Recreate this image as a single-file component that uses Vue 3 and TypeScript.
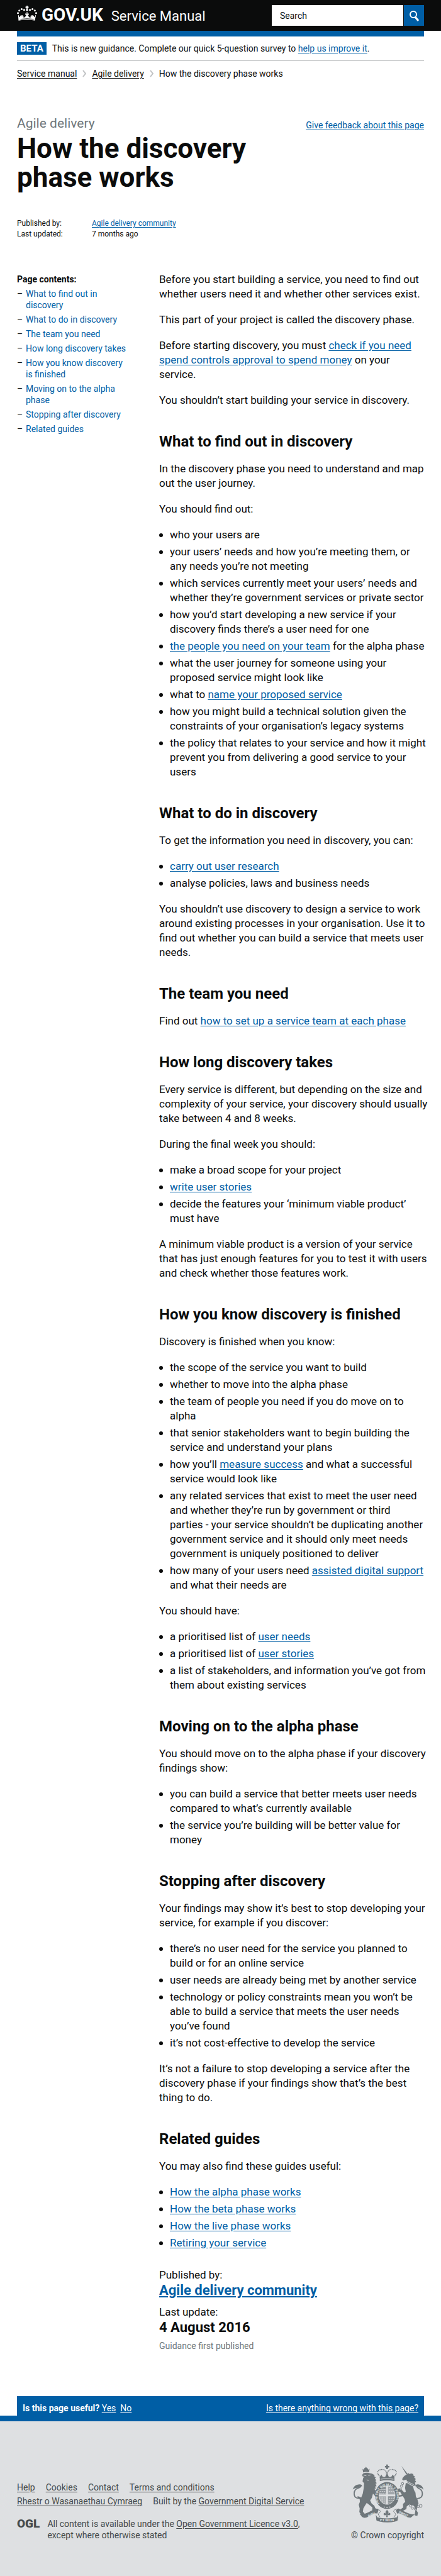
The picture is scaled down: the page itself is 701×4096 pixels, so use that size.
<script setup lang="ts">
import { ref } from 'vue'

interface Part {
  text: string
  link: boolean
}
interface Block {
  kind: 'p' | 'ul'
  lines: Part[][]
}
interface Section {
  id: string
  title: string
  blocks: Block[]
}

// "[label]" marks a link inside running text, "\n" a preferred line break
function parse(source: string): Part[] {
  return source
    .split(/(\[[^\]]+\])/)
    .filter((s) => s !== '')
    .map((s) => (s.startsWith('[') ? { text: s.slice(1, -1), link: true } : { text: s, link: false }))
}
const p = (source: string): Block => ({ kind: 'p', lines: [parse(source)] })
const ul = (...items: string[]): Block => ({ kind: 'ul', lines: items.map(parse) })

const lead: Part[][] = [
  'Before you start building a service, you need to find out\nwhether users need it and whether other services exist.',
  'This part of your project is called the discovery phase.',
  'Before starting discovery, you must [check if you need\nspend controls approval to spend money] on your\nservice.',
  'You shouldn’t start building your service in discovery.',
].map(parse)

const sections: Section[] = [
  {
    id: 'what-to-find-out',
    title: 'What to find out in discovery',
    blocks: [
      p('In the discovery phase you need to understand and map\nout the user journey.'),
      p('You should find out:'),
      ul(
        'who your users are',
        'your users’ needs and how you’re meeting them, or\nany needs you’re not meeting',
        'which services currently meet your users’ needs and\nwhether they’re government services or private sector',
        'how you’d start developing a new service if your\ndiscovery finds there’s a user need for one',
        '[the people you need on your team] for the alpha phase',
        'what the user journey for someone using your\nproposed service might look like',
        'what to [name your proposed service]',
        'how you might build a technical solution given the\nconstraints of your organisation’s legacy systems',
        'the policy that relates to your service and how it might\nprevent you from delivering a good service to your\nusers',
      ),
    ],
  },
  {
    id: 'what-to-do',
    title: 'What to do in discovery',
    blocks: [
      p('To get the information you need in discovery, you can:'),
      ul('[carry out user research]', 'analyse policies, laws and business needs'),
      p('You shouldn’t use discovery to design a service to work\naround existing processes in your organisation. Use it to\nfind out whether you can build a service that meets user\nneeds.'),
    ],
  },
  {
    id: 'team',
    title: 'The team you need',
    blocks: [p('Find out [how to set up a service team at each phase]')],
  },
  {
    id: 'how-long',
    title: 'How long discovery takes',
    blocks: [
      p('Every service is different, but depending on the size and\ncomplexity of your service, your discovery should usually\ntake between 4 and 8 weeks.'),
      p('During the final week you should:'),
      ul(
        'make a broad scope for your project',
        '[write user stories]',
        'decide the features your ‘minimum viable product’\nmust have',
      ),
      p('A minimum viable product is a version of your service\nthat has just enough features for you to test it with users\nand check whether those features work.'),
    ],
  },
  {
    id: 'finished',
    title: 'How you know discovery is finished',
    blocks: [
      p('Discovery is finished when you know:'),
      ul(
        'the scope of the service you want to build',
        'whether to move into the alpha phase',
        'the team of people you need if you do move on to\nalpha',
        'that senior stakeholders want to begin building the\nservice and understand your plans',
        'how you’ll [measure success] and what a successful\nservice would look like',
        'any related services that exist to meet the user need\nand whether they’re run by government or third\nparties - your service shouldn’t be duplicating another\ngovernment service and it should only meet needs\ngovernment is uniquely positioned to deliver',
        'how many of your users need [assisted digital support]\nand what their needs are',
      ),
      p('You should have:'),
      ul(
        'a prioritised list of [user needs]',
        'a prioritised list of [user stories]',
        'a list of stakeholders, and information you’ve got from\nthem about existing services',
      ),
    ],
  },
  {
    id: 'alpha',
    title: 'Moving on to the alpha phase',
    blocks: [
      p('You should move on to the alpha phase if your discovery\nfindings show:'),
      ul(
        'you can build a service that better meets user needs\ncompared to what’s currently available',
        'the service you’re building will be better value for\nmoney',
      ),
    ],
  },
  {
    id: 'stopping',
    title: 'Stopping after discovery',
    blocks: [
      p('Your findings may show it’s best to stop developing your\nservice, for example if you discover:'),
      ul(
        'there’s no user need for the service you planned to\nbuild or for an online service',
        'user needs are already being met by another service',
        'technology or policy constraints mean you won’t be\nable to build a service that meets the user needs\nyou’ve found',
        'it’s not cost-effective to develop the service',
      ),
      p('It’s not a failure to stop developing a service after the\ndiscovery phase if your findings show that’s the best\nthing to do.'),
    ],
  },
  {
    id: 'related',
    title: 'Related guides',
    blocks: [
      p('You may also find these guides useful:'),
      ul('[How the alpha phase works]', '[How the beta phase works]', '[How the live phase works]', '[Retiring your service]'),
    ],
  },
]

const query = ref('')
</script>

<template>
  <div class="page">
    <header class="top">
      <div class="wrap top-row">
        <a class="brand" href="#">
          <svg class="crown" viewBox="0 0 104 78" aria-hidden="true">
            <g fill="#fff">
              <path d="M49 0h6v5h5v6h-5v6h-6v-6h-5V5h5z" />
              <circle cx="52" cy="22" r="6" />
              <circle cx="37" cy="22" r="5" /><circle cx="24" cy="18" r="5" /><circle cx="12" cy="25" r="5" /><circle cx="5" cy="38" r="5" />
              <circle cx="67" cy="22" r="5" /><circle cx="80" cy="18" r="5" /><circle cx="92" cy="25" r="5" /><circle cx="99" cy="38" r="5" />
              <path d="M8 47l4 12 5-3-1-6 8 5-1-6h6l-1 7 6-4-1 9 8-1 8-13-6 1v-8l7 3-2-8h8l-2 8 7-3v8l-6-1 8 13 8 1-1-9 6 4-1-7h6l-1 6 8-5-1 6 5 3 4-12 2 3-6 27q-39-8-84 0L6 50z" />
            </g>
            <path d="M18 70q34-5 68 0" fill="none" stroke="#0b0c0c" stroke-width="3" />
          </svg>
          <span class="logotype">GOV.UK</span>
          <span class="product">Service Manual</span>
        </a>
        <form class="search" role="search" @submit.prevent>
          <input v-model="query" type="search" placeholder="Search" aria-label="Search" />
          <button type="submit" aria-label="Search">
            <svg viewBox="0 0 18 18" aria-hidden="true">
              <circle cx="8" cy="7" r="5" fill="none" stroke="#fff" stroke-width="2" />
              <path d="M11 11l5 6" stroke="#fff" stroke-width="3" />
            </svg>
          </button>
        </form>
      </div>
    </header>

    <div class="wrap">
      <div class="bar"></div>
      <div class="phase">
        <strong class="tag">BETA</strong>
        <span>This is new guidance. Complete our quick 5-question survey to <a href="#">help us improve it</a>.</span>
      </div>
      <nav class="crumbs" aria-label="Breadcrumb">
        <a href="#">Service manual</a>
        <svg viewBox="0 0 6 12" aria-hidden="true"><path d="M1 1l4 5-4 5" /></svg>
        <a href="#">Agile delivery</a>
        <svg viewBox="0 0 6 12" aria-hidden="true"><path d="M1 1l4 5-4 5" /></svg>
        <span>How the discovery phase works</span>
      </nav>

      <div class="title-row">
        <div class="title">
          <p class="topic">Agile delivery</p>
          <h1>How the discovery phase works</h1>
        </div>
        <a class="feedback" href="#">Give feedback about this page</a>
      </div>

      <dl class="meta">
        <dt>Published by:</dt>
        <dd><a href="#">Agile delivery community</a></dd>
        <dt>Last updated:</dt>
        <dd>7 months ago</dd>
      </dl>

      <div class="columns">
        <nav class="contents" aria-labelledby="contents-title">
          <h2 id="contents-title">Page contents:</h2>
          <ol>
            <li v-for="s in sections" :key="s.id"><a :href="'#' + s.id">{{ s.title }}</a></li>
          </ol>
        </nav>

        <main class="article">
          <p v-for="(parts, i) in lead" :key="i" class="copy">
            <template v-for="(part, k) in parts" :key="k"><a v-if="part.link" href="#">{{ part.text }}</a><template v-else>{{ part.text }}</template></template>
          </p>
          <section v-for="s in sections" :key="s.id">
            <h2 :id="s.id">{{ s.title }}</h2>
            <template v-for="(b, i) in s.blocks" :key="i">
              <p v-if="b.kind === 'p'" class="copy">
                <template v-for="(part, k) in b.lines[0]" :key="k"><a v-if="part.link" href="#">{{ part.text }}</a><template v-else>{{ part.text }}</template></template>
              </p>
              <ul v-else>
                <li v-for="(line, j) in b.lines" :key="j" class="copy">
                  <template v-for="(part, k) in line" :key="k"><a v-if="part.link" href="#">{{ part.text }}</a><template v-else>{{ part.text }}</template></template>
                </li>
              </ul>
            </template>
          </section>

          <dl class="published">
            <dt>Published by:</dt>
            <dd><a href="#">Agile delivery community</a></dd>
            <dt>Last update:</dt>
            <dd>4 August 2016</dd>
          </dl>
          <p class="first">Guidance first published</p>
        </main>
      </div>

      <div class="useful">
        <div><strong>Is this page useful?</strong> <a href="#">Yes</a>&nbsp; <a href="#">No</a></div>
        <a href="#">Is there anything wrong with this page?</a>
      </div>
    </div>

    <footer class="footer">
      <div class="wrap footer-row">
        <div class="footer-meta">
          <ul class="footer-links">
            <li><a href="#">Help</a></li>
            <li><a href="#">Cookies</a></li>
            <li><a href="#">Contact</a></li>
            <li><a href="#">Terms and conditions</a></li>
            <li><a href="#">Rhestr o Wasanaethau Cymraeg</a></li>
            <li>Built by the <a href="#">Government Digital Service</a></li>
          </ul>
          <div class="licence">
            <span class="ogl">OGL</span>
            <p>All content is available under the <a href="#">Open Government Licence v3.0</a>, except where otherwise stated</p>
          </div>
        </div>
        <a class="copyright" href="#">
          <svg class="crest" viewBox="8 26 378 310" aria-hidden="true">
            <g fill="#6f777b" stroke="none">
              <!-- lion -->
              <path d="M62 50l6 5 5-10 3 0 4-6 4 6 3 0 5 10 7-5-3 19q-15-4-31 0z" />
              <path d="M62 76q20-8 38-3l12 3 14 8-3 5 9 7-5 5 8 10-6 3 8 12-7 3 6 13-8 2 4 11-8 1 6 8 8 6 9-4-3 9-8 4-2 8 3 8-10-2-10-12-6 22-9 14 8 16 14 12 6 14 13 3 2 8-8 7-18 1-6-10 1-14-14-12-16-12-10 16-8 14-2 16 14 16 12 4-2 9-14 4-16-5-4-12-9-14 2-18-5-20 6-16-1-14-9-6-4-8 9 0 12 6 8-20 5-28 2-28-8-10 3-16 5-8-8-2-2-8 6-8z" />
              <!-- unicorn -->
              <path d="M266 34l34 43-7 4z" />
              <path d="M296 80l8-8 4 5 12-2 10 3-2 7 10 5-4 6 9 9-5 4 7 11-7 3 4 14-12 4-32-14-4-20-17 4-6-4 2-8 10-12z" />
              <path d="M290 124l38 18 5 20 8 14 2 20 8 14 6 22-8 22-3 14 8 14-3 16-14-2 1-12 4-20-9-18-24-8-14 10-2 14-18 10-10 8-20-3-1-8 18-5 14-10-1-18 12-12-4-16-9-14-20 4-10-10 3-6 12 8 10-4-9-14-17-3-2-10 12-4 17 8 12 12 8-4-4-20z" />
            </g>
            <g fill="none" stroke="#6f777b" stroke-width="6">
              <path d="M50 205q-34 5-32-28 2-20 24-26 12-4 10-14" />
              <path d="M350 207q30-2 27-30-2-18-20-24-12-6-8-18" />
            </g>
            <g fill="#6f777b">
              <path d="M10 159q8-24 30-26 18-4 20 10-16-2-20 8-12-4-30 8z" />
              <path d="M384 160q-6-24-28-28-14-2-16 10 14 0 18 8 12-2 26 10z" />
              <!-- crown -->
              <path d="M187 28h9v7h7v8h-7v9h-9v-9h-7v-8h7z" />
              <path d="M153 93l8-12 8 12 12 0 10-20 10 20 12 0 8-12 9 12 0 22q-38-9-77 0z" />
            </g>
            <g fill="none" stroke="#6f777b" stroke-width="5" stroke-dasharray="5 3">
              <path d="M156 96q-26-30-4-40 26-8 36 12v24" />
              <path d="M226 96q26-30 4-40-26-8-36 12v24" />
            </g>
            <path d="M157 105q34-8 68 0" fill="none" stroke="#dee0e2" stroke-width="3" />
            <!-- garter and shield -->
            <ellipse cx="191" cy="191" rx="63" ry="71" fill="#6f777b" />
            <ellipse cx="191" cy="189" rx="44" ry="50" fill="#dee0e2" />
            <path id="garter" d="M152 233A51 57 0 1 1 231 233" fill="none" />
            <text class="motto" font-size="17"><textPath href="#garter">HONI SOIT QUI MAL Y PENSE</textPath></text>
            <g fill="#6f777b">
              <path d="M156 158q12-14 30-15v42h-36q0-16 6-27z" opacity=".75" />
              <path d="M196 143q20 1 30 15 6 11 6 27h-36z" opacity=".55" />
              <path d="M150 195h36v41q-30-4-36-41z" opacity=".5" />
              <path d="M196 195h36q-4 36-36 41z" opacity=".75" />
            </g>
            <g fill="#dee0e2">
              <circle cx="176" cy="252" r="3" /><circle cx="191" cy="254" r="3" /><circle cx="206" cy="252" r="3" />
            </g>
            <g stroke="#dee0e2" stroke-width="3" fill="none">
              <path d="M156 160h28M153 170h31M151 179h33M200 154l26 0M200 170h30M160 200v22M168 200v30M176 200v34M200 205h30M199 216h28M198 226h20" stroke-dasharray="7 3" />
              <path d="M297 122l34 20M296 116l36 18" />
              <path d="M68 84l14 3M92 85l12-2M84 108l10 4" />
            </g>
            <g fill="none" stroke="#6f777b" stroke-width="3">
              <circle cx="273" cy="128" r="6" /><circle cx="267" cy="142" r="6" /><circle cx="262" cy="158" r="6" />
              <circle cx="315" cy="245" r="6" /><circle cx="325" cy="258" r="6" /><circle cx="341" cy="261" r="7" /><circle cx="355" cy="250" r="6" /><circle cx="368" cy="246" r="8" />
            </g>
            <!-- ribbons -->
            <g fill="#6f777b">
              <path d="M46 290q24 2 50-12l34-18 16 8-6 18q-16-4-32 8-24 14-40 14z" />
              <path d="M338 290q-24 2-50-12l-36-18-14 8 6 18q14-4 30 8 24 14 42 14z" />
              <path d="M132 292l8 14q50 12 102 0l8-14-3 30q-8 10-54 11-46-1-58-11z" />
              <path d="M191 266l9 12-4 8 10-4 4 8-8 6-8-4 1 13h-8l1-13-8 4-8-6 4-8 10 4-4-8z" />
            </g>
            <g fill="none" stroke="#6f777b" stroke-width="3">
              <path d="M130 262q24 0 26 14l-12 14 10 14M252 262q-26 0-26 14l12 14-10 14" />
            </g>
            <text class="motto" x="191" y="328" font-size="20" text-anchor="middle">ET MON</text>
            <text class="motto" x="112" y="298" font-size="18" text-anchor="middle" transform="rotate(-25 112 298)">DIEU</text>
            <text class="motto" x="275" y="294" font-size="18" text-anchor="middle" transform="rotate(27 275 294)">DROIT</text>
          </svg>
          <span>© Crown copyright</span>
        </a>
      </div>
    </footer>
  </div>
</template>

<style>
body {
  margin: 0;
  background: #fff;
}
</style>

<style scoped>
.page {
  display: flex;
  flex-direction: column;
  min-height: 100vh;
  color: #0b0c0c;
  font: 14px/18px Roboto, "Liberation Sans", sans-serif;
}
h1, h2, p, ul, ol, dl, dd {
  margin: 0;
  padding: 0;
}
ul, ol {
  list-style: none;
}
a {
  color: #005ea5;
  text-underline-offset: 2px;
}
.wrap {
  margin: 0 27px;
}
.top {
  background: #0b0c0c;
}
.top-row {
  display: flex;
  justify-content: space-between;
  align-items: center;
  height: 49px;
}
.brand {
  display: flex;
  align-items: baseline;
  color: #fff;
  text-decoration: none;
}
.crown {
  width: 32px;
  height: 24px;
  margin-right: 7px;
}
.logotype {
  font-size: 28px;
  font-weight: 700;
  line-height: 32px;
}
.product {
  margin-left: 13px;
  font-size: 22px;
  line-height: 32px;
}
.search {
  display: flex;
  gap: 1px;
  width: 242px;
  height: 33px;
}
.search input {
  flex: 1;
  min-width: 0;
  box-sizing: border-box;
  padding: 0 13px;
  border: 0;
  border-radius: 0;
  background: #fff;
  font: inherit;
  color: #0b0c0c;
  appearance: none;
}
.search input::placeholder {
  color: #0b0c0c;
  opacity: 1;
}
.search button {
  display: flex;
  align-items: center;
  justify-content: center;
  width: 32px;
  padding: 0;
  border: 0;
  background: #005ea5;
}
.search svg {
  width: 18px;
  height: 18px;
}
.bar {
  height: 9px;
  background: #005ea5;
}
.phase {
  display: flex;
  align-items: center;
  gap: 9px;
  padding: 9px 0;
  border-bottom: 1px solid #bfc1c3;
}
.tag {
  padding: 0 5px;
  background: #005ea5;
  color: #fff;
  font-size: 15px;
  line-height: 20px;
}
.crumbs {
  display: flex;
  align-items: center;
  gap: 9px;
  margin-top: 11px;
}
.crumbs a {
  color: #0b0c0c;
}
.crumbs svg {
  width: 6px;
  height: 12px;
  fill: none;
  stroke: #bfc1c3;
  stroke-width: 2;
}
.title-row {
  display: flex;
  justify-content: space-between;
  margin-top: 57px;
}
.title {
  flex: 0 1 66%;
}
.topic {
  color: #6f777b;
  font-size: 21px;
  line-height: 27px;
}
h1 {
  margin-top: 3px;
  font-size: 44px;
  line-height: 46px;
}
.feedback {
  margin-top: 7px;
}
.meta {
  display: grid;
  grid-template-columns: 119px 1fr;
  margin-top: 42px;
  font-size: 12px;
  line-height: 17px;
}
.columns {
  display: grid;
  grid-template-columns: 176px 1fr;
  column-gap: 50px;
  margin-top: 52px;
}
.contents h2 {
  margin-top: 2px;
  font-size: 14px;
  line-height: 18px;
}
.contents li {
  position: relative;
  margin-top: 5px;
  padding-left: 14px;
}
.contents li::before {
  content: "–";
  position: absolute;
  left: 0;
}
.contents a {
  text-decoration: none;
}
.article {
  margin-right: -18px;
  font-size: 17px;
  line-height: 23px;
}
.copy {
  white-space: pre-line;
}
.article p,
.article ul {
  margin-bottom: 18px;
}
.article h2 {
  margin: 41px 0 18px;
  font-size: 24px;
  line-height: 27px;
}
.article li {
  position: relative;
  margin-bottom: 4px;
  padding-left: 17px;
}
.article li:last-child {
  margin-bottom: 0;
}
.article li::before {
  content: "";
  position: absolute;
  top: 9px;
  left: 0;
  width: 6px;
  height: 6px;
  border-radius: 50%;
  background: #0b0c0c;
}
.published {
  margin-top: 28px;
}
.published dd {
  margin-bottom: 10px;
  font-size: 22px;
  font-weight: 700;
  line-height: 26px;
}
.published dd:last-child {
  margin-bottom: 7px;
}
.article .first {
  margin: 0;
  color: #6f777b;
  font-size: 14px;
  line-height: 18px;
}
.useful {
  display: flex;
  justify-content: space-between;
  margin-top: 71px;
  padding: 10px 9px 3px;
  background: #005ea5;
  color: #fff;
}
.useful a {
  color: #fff;
}
.footer {
  flex: 1;
  border-top: 9px solid #005ea5;
  background: #dee0e2;
  color: #454a4c;
}
.footer-row {
  display: flex;
  justify-content: space-between;
  align-items: flex-end;
  padding: 68px 0 56px;
}
.footer a {
  color: #454a4c;
}
.footer-meta {
  flex: 0 1 480px;
}
.footer-links {
  display: flex;
  flex-wrap: wrap;
  gap: 4px 17px;
}
.licence {
  display: flex;
  gap: 12px;
  margin-top: 18px;
}
.ogl {
  font-size: 19px;
  font-weight: 900;
}
.footer .copyright {
  display: flex;
  flex-direction: column;
  align-items: flex-end;
  gap: 10px;
  text-decoration: none;
}
.crest {
  width: 114px;
  height: 94px;
}
.motto {
  fill: #dee0e2;
  font-weight: 700;
}
</style>
